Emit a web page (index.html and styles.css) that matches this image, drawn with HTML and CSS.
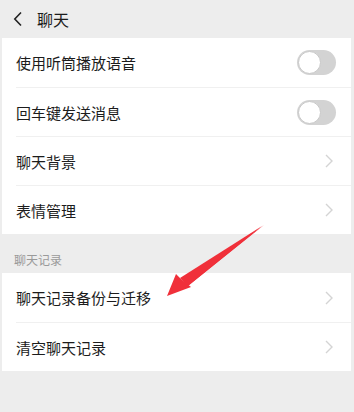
FILE: index.html
```html
<!DOCTYPE html>
<html lang="zh">
<head>
    <meta charset="UTF-8">
    <title>聊天</title>
    <link rel="stylesheet" href="styles.css">
</head>
<body>
    <div class="topbar">
        <svg class="back" width="10" height="16" viewBox="0 0 10 16"><path d="M8 1.5 L1.8 8 L8 14.5" fill="none" stroke="#222" stroke-width="1.6"/></svg>
        <span class="title">聊天</span>
    </div>
    <div class="card">
        <div class="row">
            <span class="label">使用听筒播放语音</span>
            <span class="switch"><span class="knob"></span></span>
        </div>
        <div class="row">
            <span class="label">回车键发送消息</span>
            <span class="switch"><span class="knob"></span></span>
        </div>
        <div class="row">
            <span class="label">聊天背景</span>
            <svg class="chev" width="8" height="14" viewBox="0 0 8 14"><path d="M1 1 L7 7 L1 13" fill="none" stroke="#d4d4d4" stroke-width="1.4"/></svg>
        </div>
        <div class="row">
            <span class="label">表情管理</span>
            <svg class="chev" width="8" height="14" viewBox="0 0 8 14"><path d="M1 1 L7 7 L1 13" fill="none" stroke="#d4d4d4" stroke-width="1.4"/></svg>
        </div>
    </div>
    <div class="section">聊天记录</div>
    <div class="card">
        <div class="row">
            <span class="label">聊天记录备份与迁移</span>
            <svg class="chev" width="8" height="14" viewBox="0 0 8 14"><path d="M1 1 L7 7 L1 13" fill="none" stroke="#d4d4d4" stroke-width="1.4"/></svg>
        </div>
        <div class="row">
            <span class="label">清空聊天记录</span>
            <svg class="chev" width="8" height="14" viewBox="0 0 8 14"><path d="M1 1 L7 7 L1 13" fill="none" stroke="#d4d4d4" stroke-width="1.4"/></svg>
        </div>
    </div>
    <svg class="arrow" width="354" height="412" viewBox="0 0 354 412">
        <path d="M264 225 L186 280 L189 285 Z" fill="#f0303a"/>
        <path d="M167 296 L176 274 L181 279 L191 287 Z" fill="#f0303a"/>
        <path d="M262 226 L180 278 L188 286 Z" fill="#f0303a"/>
    </svg>
</body>
</html>
```

FILE: styles.css
```css
html, body {
    margin: 0;
    padding: 0;
}
body {
    background-color: #ededed;
    font-family: "Noto Sans CJK SC", "Noto Sans", sans-serif;
    color: #1c1c1c;
    width: 354px;
    height: 412px;
    overflow: hidden;
    position: relative;
}
.topbar {
    height: 38px;
    display: flex;
    align-items: center;
    padding-left: 13px;
}
.back {
    margin-right: 14px;
}
.title {
    font-size: 16px;
}
.card {
    background-color: #ffffff;
    margin: 0 3px 0 2px;
    padding-left: 14px;
}
.row {
    height: 49px;
    display: flex;
    align-items: center;
    justify-content: space-between;
    padding-right: 16px;
    border-top: 1px solid #f0f0f0;
    box-sizing: border-box;
}
.row:first-child {
    border-top: none;
}
.label {
    font-size: 15px;
}
.switch {
    width: 39px;
    height: 25px;
    border-radius: 13px;
    background-color: #d3d3d3;
    position: relative;
    margin-right: -1px;
}
.knob {
    position: absolute;
    left: 1px;
    top: 1px;
    width: 21px;
    height: 21px;
    border: 1px solid #c8c8c8;
    border-radius: 50%;
    background-color: #ffffff;
}
.chev {
    margin-right: 2px;
}
.section {
    height: 39px;
    box-sizing: border-box;
    padding-top: 17px;
    line-height: 18px;
    padding-left: 14px;
    font-size: 12px;
    color: #9a9a9a;
}
.arrow {
    position: absolute;
    left: 0;
    top: 0;
}
```
